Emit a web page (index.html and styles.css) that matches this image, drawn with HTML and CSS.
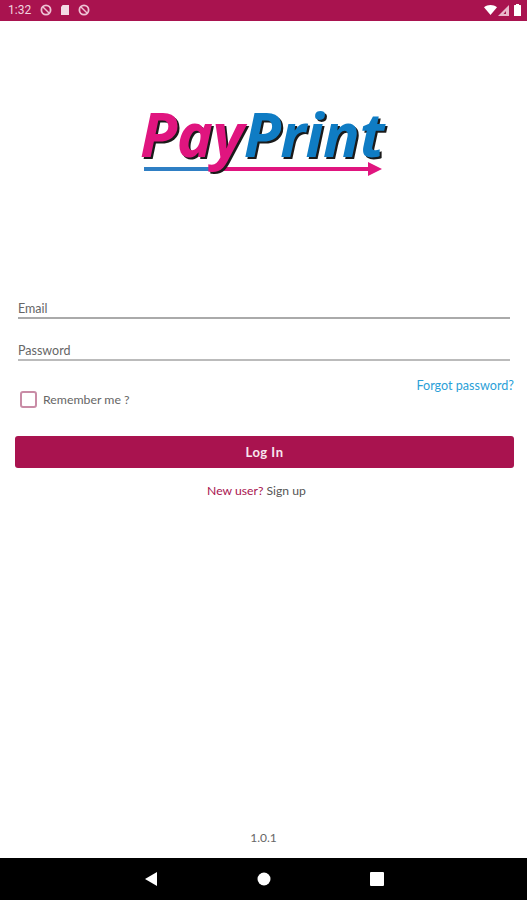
FILE: index.html
```html
<!DOCTYPE html>
<html lang="en">
<head>
<meta charset="utf-8">
<title>PayPrint</title>
<link rel="stylesheet" href="styles.css">
</head>
<body>
<div class="screen">
  <header class="status">
    <div class="status-left">
      <span class="time">1:32</span>
      <svg class="ico" viewBox="0 0 12 12"><circle cx="6" cy="6" r="4.6" fill="none" stroke="#eec3d4" stroke-width="1.8"/><path d="M3 3l6 6" stroke="#eec3d4" stroke-width="1.4"/></svg>
      <svg class="ico" viewBox="0 0 12 12"><path d="M3.6 1H10v10H2V3z" fill="#f3dbe5"/></svg>
      <svg class="ico" viewBox="0 0 12 12"><circle cx="6" cy="6" r="4.6" fill="none" stroke="#eec3d4" stroke-width="1.8"/><path d="M3 3l6 6" stroke="#eec3d4" stroke-width="1.4"/></svg>
    </div>
    <div class="status-right">
      <svg class="wifi" viewBox="0 0 13 10"><path d="M0 2.2C3.6-.7 9.400-.7 13 2.200L6.500 10z" fill="#fff"/></svg>
      <svg class="signal" viewBox="0 0 11 11"><path d="M11 0v11H0z" fill="#e8b8cb"/><path d="M8 6v3H5.500z" fill="#a9134f"/></svg>
      <svg class="battery" viewBox="0 0 7 12"><path d="M2 0h3v1h1.500a.5.5 0 0 1 .5.500V12H0V1.500A.5.5 0 0 1 .5 1H2z" fill="#fff"/></svg>
    </div>
  </header>

  <main class="content">
    <div class="logo">
      <svg class="logo-arrow" viewBox="0 0 240 16"><rect x="0" y="5" width="80" height="4" fill="#2f7fc4"/><rect x="80" y="5" width="146" height="4" fill="#e0157f"/><path d="M224 0l14 7-14 7z" fill="#e0157f"/></svg>
      <div class="logo-word"><span class="pink">Pay</span><span class="blue">Print</span></div>
    </div>

    <form class="form">
      <div class="field"><span class="label">Email</span></div>
      <div class="field field-second"><span class="label">Password</span></div>
      <a class="forgot">Forgot password?</a>
      <label class="remember"><span class="box"></span><span class="remember-text">Remember me ?</span></label>
      <div class="login">Log In</div>
      <p class="signup"><span class="new">New user?</span> <span class="sign">Sign up</span></p>
    </form>

    <p class="version">1.0.1</p>
  </main>

  <nav class="nav">
    <svg class="nav-ico" viewBox="0 0 14 14"><path d="M13 0v14L1 7z" fill="#fff"/></svg>
    <svg class="nav-ico" viewBox="0 0 14 14"><circle cx="7" cy="7" r="6.500" fill="#fff"/></svg>
    <svg class="nav-ico" viewBox="0 0 14 14"><rect width="14" height="14" rx="1" fill="#fff"/></svg>
  </nav>
</div>
</body>
</html>
```
FILE: styles.css
```css
* { box-sizing: border-box; }
html, body { margin: 0; padding: 0; height: 100%; }
body { background: #fff; font-family: Lato, "Open Sans", sans-serif; color: #555; overflow: hidden; }
.screen { display: flex; flex-direction: column; width: 527px; height: 900px; }

.status { flex: none; height: 21px; background: #a9134f; display: flex; justify-content: space-between; align-items: center; padding: 0 6px 1px 8px; }
.status-left { display: flex; align-items: center; gap: 7px; }
.time { font-family: Roboto, sans-serif; font-size: 12px; color: #f0d3df; margin-right: 2px; }
.ico { width: 12px; height: 12px; display: block; }
.status-right { display: flex; align-items: center; gap: 1px; }
.wifi { width: 13px; height: 10px; }
.signal { width: 11px; height: 11px; margin-right: 4px; }
.battery { width: 7px; height: 12px; }

.content { flex: 1; display: flex; flex-direction: column; position: relative; }

.logo { width: 244px; margin: 81px 0 0 140px; position: relative; height: 76px; filter: blur(.4px); }
.logo-word { position: relative; font-family: "Open Sans", sans-serif; font-weight: 700; font-style: italic; font-size: 61px; line-height: 64px; letter-spacing: -.5px; white-space: nowrap; text-shadow: 2px 2px 0 #1a1a1a; }
.pink { color: #e0157f; }
.blue { color: #0f7cc4; }
.logo-arrow { position: absolute; left: 4px; top: 60px; width: 240px; height: 16px; }

.form { padding: 0 13px 0 15px; margin-top: 120px; display: flex; flex-direction: column; }
.field { margin: 0 4px 0 3px; height: 21px; border-bottom: 2px solid #aaa; display: flex; align-items: flex-end; }
.field-second { margin-top: 21px; border-bottom-color: #bbb; }
.label { font-size: 12.500px; line-height: 17px; color: #666; }
.forgot { align-self: flex-end; margin-top: 17px; font-size: 12.600px; line-height: 16px; color: #2b9fd8; }
.remember { display: flex; align-items: center; gap: 6px; margin: -5px 0 0 5px; height: 20px; }
.box { width: 17px; height: 17px; border: 2px solid #c98ca6; border-radius: 3px; }
.remember-text { font-size: 12.300px; color: #666; }
.login { margin-top: 27px; height: 32px; background: #a9134f; border-radius: 3px; color: #f8e6ee; font-size: 13px; font-weight: 700; letter-spacing: .5px; display: flex; align-items: center; justify-content: center; }
.signup { margin: 15px 16px 0 0; text-align: center; font-size: 12.200px; line-height: 16px; }
.new { color: #a9134f; }
.sign { color: #555; }

.version { position: absolute; left: 0; right: 0; bottom: 12px; margin: 0; text-align: center; font-size: 12px; line-height: 16px; color: #666; }

.nav { flex: none; height: 42px; background: #000; display: flex; justify-content: center; align-items: center; gap: 99px; }
.nav-ico { width: 14px; height: 14px; display: block; }
```
